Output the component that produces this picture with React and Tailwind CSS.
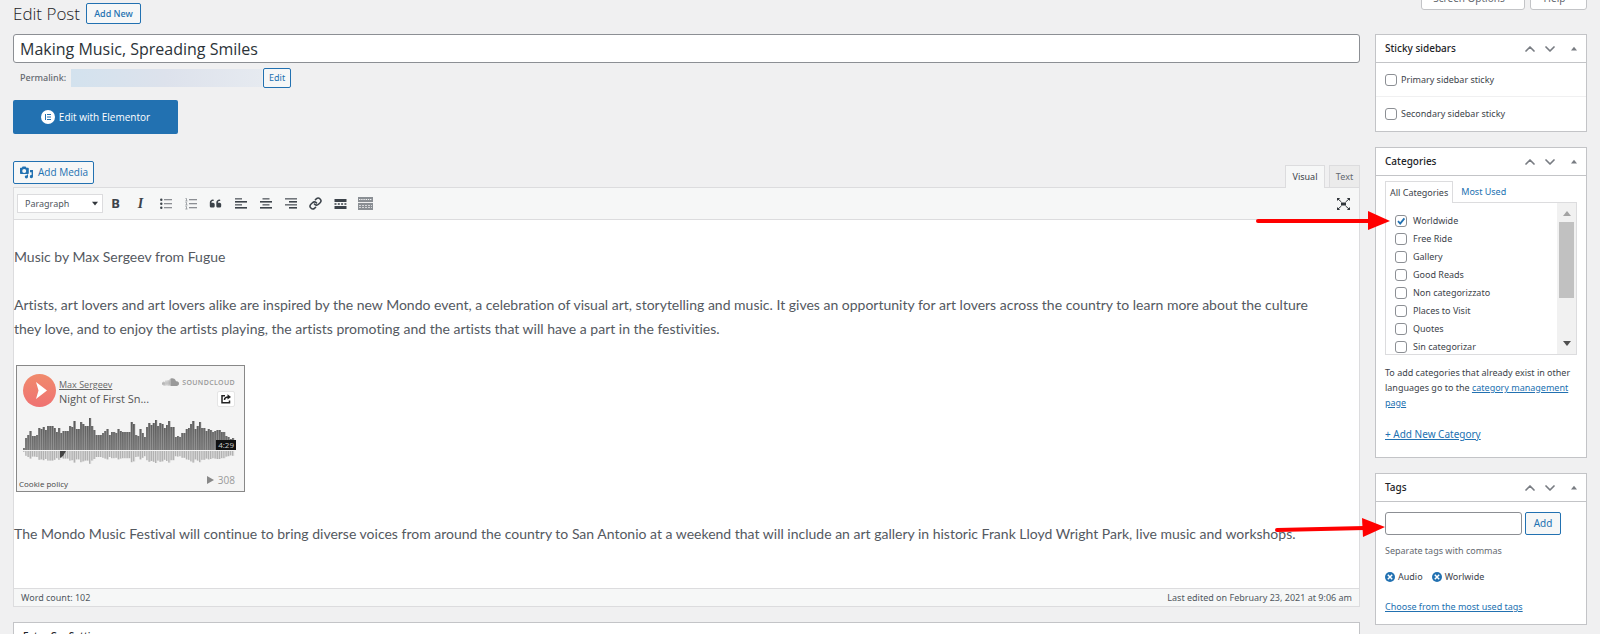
import { useState } from 'react';
import { ChevronDown, ChevronUp, Link } from 'lucide-react';
import { FaQuoteLeft, FaSoundcloud } from 'react-icons/fa6';

const CATEGORIES = ['Worldwide', 'Free Ride', 'Gallery', 'Good Reads', 'Non categorizzato', 'Places to Visit', 'Quotes', 'Sin categorizar'];

const PEAKS = [
  2, 12, 15, 19, 14, 14, 15, 22, 21, 23, 20, 24, 24, 24, 22, 18, 22, 17, 19, 19, 19, 24, 23, 29, 21, 21, 28, 26, 24, 24, 32, 24,
  20, 15, 15, 15, 17, 19, 21, 15, 18, 18, 17, 21, 19, 18, 18, 18, 18, 28, 26, 15, 14, 21, 17, 13, 23, 27, 25, 27, 30, 24, 27, 26,
  22, 25, 29, 23, 23, 13, 14, 13, 17, 17, 21, 22, 26, 29, 21, 24, 28, 22, 22, 19, 21, 20, 18, 19, 20, 20, 18, 18, 14, 13, 11, 12,
];

const outlineBtn = 'rounded-[2px] border border-[#2271b1] bg-[#f6f7f7] text-[#2271b1] cursor-pointer';
const link = 'text-[#2271b1] underline';

function Lines({ widths, align }) {
  return (
    <svg width="12" height="11" viewBox="0 0 12 11" aria-hidden="true">
      {widths.map((w, i) => (
        <rect key={i} x={align === 'right' ? 12 - w : align === 'center' ? (12 - w) / 2 : 0} y={i * 3} width={w} height="1.6"
          fill={i % 2 ? '#3c434a' : '#72777c'} />
      ))}
    </svg>
  );
}

function ListIcon({ ordered }) {
  return (
    <svg width="12" height="12" viewBox="0 0 12 12" aria-hidden="true">
      {[1, 5, 9].map((y) => (
        <g key={y}>
          {ordered
            ? <path d={`M0.5 ${y - 0.5}h1v2.4M0.3 ${y + 2}h2.2`} stroke="#8c8f94" strokeWidth="0.8" fill="none" />
            : <circle cx="1.3" cy={y + 0.7} r="1.2" fill="#3c434a" />}
          <rect x="4" y={y} width="8" height="1.3" fill="#8c8f94" />
        </g>
      ))}
    </svg>
  );
}

function MoreIcon() {
  return (
    <svg width="13" height="12" viewBox="0 0 13 12" fill="#3c434a" aria-hidden="true">
      <path d="M0.5 1h12v3h-12zM0.5 8h12v3h-12zM0.5 5.3h2v1.4h-2zM3.8 5.3h2v1.4h-2zM7.1 5.3h2v1.4h-2zM10.4 5.3h2v1.4h-2z" />
    </svg>
  );
}

function KitchenSinkIcon() {
  return (
    <svg width="15" height="13" viewBox="0 0 15 13" aria-hidden="true">
      <rect width="15" height="13" fill="#8a8f94" />
      <path d="M1 2.5h13" stroke="#f0f0f1" strokeWidth="1" strokeDasharray="1.4 0.8" />
      <path d="M0 5.5h15" stroke="#f0f0f1" strokeWidth="1" />
      <path d="M1 8.5h13M1 10.5h13" stroke="#d5d6d9" strokeWidth="1" strokeDasharray="2 1" />
    </svg>
  );
}

function FullscreenIcon() {
  return (
    <svg width="13" height="12" viewBox="0 0 13 12" fill="#32373c" aria-hidden="true">
      <path d="M0 0h3.2L0 3zM13 0H9.8L13 3zM0 12h3.2L0 9zM13 12H9.8L13 9z" />
      <path d="M1 1l3.4 3M12 1L8.6 4M1 11l3.4-3M12 11L8.6 8" stroke="#32373c" strokeWidth="1" />
      <rect x="4" y="4.5" width="5" height="3" />
    </svg>
  );
}

function MediaIcon() {
  return (
    <svg width="14" height="13" viewBox="0 0 14 13" fill="#2271b1" aria-hidden="true">
      <path fillRule="evenodd" d="M0.6 1.8h1.2L2.6 0.6h3l0.8 1.2H8c0.5 0 0.8 0.3 0.8 0.8v4.6c0 0.5-0.3 0.8-0.8 0.8H0.8C0.3 8 0 7.7 0 7.2V2.6c0-0.5 0.2-0.8 0.6-0.8zM4.2 2.9a2 2 0 1 0 0 4 2 2 0 0 0 0-4z" />
      <path d="M10 4h3v6.6a1.6 1.6 0 1 1-1.4-1.6V6.2H10z" />
      <circle cx="6.4" cy="10.8" r="1.6" />
      <path d="M7 8.4h1v2.4H7z" />
    </svg>
  );
}

function ElementorIcon() {
  return (
    <svg width="14" height="14" viewBox="0 0 14 14" aria-hidden="true">
      <circle cx="7" cy="7" r="7" fill="#fff" />
      <path d="M4 4h1v6h-1zM6 4h4v1h-4zM6 6.5h4v1h-4zM6 9h4v1h-4z" fill="#2271b1" />
    </svg>
  );
}

function Caret({ down, className }) {
  return (
    <svg width="8" height="5" viewBox="0 0 8 5" className={className} aria-hidden="true">
      <path d={down ? 'M0 0h8L4 5z' : 'M0 5h8L4 0z'} fill="currentColor" />
    </svg>
  );
}

function Checkbox({ label, defaultChecked, className }) {
  const [checked, setChecked] = useState(!!defaultChecked);
  return (
    <label className={`flex items-center ${className}`}>
      <span className="relative flex">
        <input type="checkbox" checked={checked} onChange={(e) => setChecked(e.target.checked)}
          className="appearance-none size-3 rounded-[3px] border border-[#8c8f94] bg-white" />
        {checked && (
          <svg viewBox="0 0 12 12" className="absolute inset-0 size-3 pointer-events-none" aria-hidden="true">
            <path d="M3 6.2l2.2 2.4L9.4 3.4" fill="none" stroke="#2271b1" strokeWidth="1.8" />
          </svg>
        )}
      </span>
      {label}
    </label>
  );
}

function Panel({ title, children }) {
  return (
    <section className="border border-[#c3c4c7] bg-white">
      <div className="flex items-center h-7 pl-[9px] pr-[2px] border-b border-[#c3c4c7]">
        <h2 className="flex-1 text-[10px] font-medium text-[#1d2327]">{title}</h2>
        <div className="flex items-center text-[#787c82]">
          <button aria-label={`Move ${title} up`} className="w-5 flex justify-center"><ChevronUp size={16} strokeWidth={2.6} /></button>
          <button aria-label={`Move ${title} down`} className="w-5 flex justify-center"><ChevronDown size={16} strokeWidth={2.6} /></button>
          <button aria-label={`Toggle ${title}`} className="w-5 ml-1 flex justify-center"><Caret className="w-[6px]" /></button>
        </div>
      </div>
      {children}
    </section>
  );
}

function Waveform() {
  return (
    <svg viewBox="0 0 213 48" className="w-full h-12" aria-hidden="true">
      <defs>
        <linearGradient id="wave" x1="0" y1="0" x2="0" y2="33" gradientUnits="userSpaceOnUse">
          <stop offset="0" stopColor="#555" />
          <stop offset="1" stopColor="#777" />
        </linearGradient>
      </defs>
      {PEAKS.map((h, i) => (
        <g key={i}>
          <rect x={i * 2.2} y={33 - h} width="2.2" height={h} fill="#8c8c8c" />
          <rect x={i * 2.2} y={33 - h} width="1.5" height={h} fill="url(#wave)" />
          <rect x={i * 2.2} y="34" width="1.5" height={h * 0.4} fill="#b2b2b2" />
          <rect x={i * 2.2 + 1.5} y="34" width="0.7" height={h * 0.4} fill="#d4d4d4" />
        </g>
      ))}
      <path d="M37 34h6l-3 5-3 2z" fill="#444" />
    </svg>
  );
}

function Player() {
  return (
    <div className="w-[229px] ml-[2px] border border-[#888] bg-[#f4f4f4] font-['Open_Sans',sans-serif]">
      <div className="flex pl-[6px] pr-[9px] pt-2">
        <button aria-label="Play" className="size-[33px] rounded-full bg-linear-to-b from-[#f08a6c] to-[#ef7272]">
          <svg viewBox="0 0 33 33" aria-hidden="true"><path d="M13 8l11 8.5-11 8.5 2.5-8.5z" fill="#fff" /></svg>
        </button>
        <div className="flex-1 ml-[3px] pt-1">
          <a href="#artist" className="block w-fit text-[9px] leading-[13px] text-[#666] underline">Max Sergeev</a>
          <p className="text-[11px] leading-[16px] text-[#555] whitespace-nowrap">Night of First Sn...</p>
        </div>
        <div className="flex flex-col items-end">
          <span className="flex items-center gap-[3px] text-[#999]">
            <FaSoundcloud size={17} />
            <span className="text-[7px] leading-3 font-semibold tracking-wider">SOUNDCLOUD</span>
          </span>
          <button aria-label="Share" className="w-[18px] h-4 rounded-[2px] border border-[#e5e5e5] bg-white flex items-center justify-center">
            <svg width="10" height="10" viewBox="0 0 10 10" fill="none" stroke="#222" strokeWidth="1.5" aria-hidden="true">
              <path d="M4 1.8H1v7h7.5V6.5M3.5 6c0-2 1.5-3 4-3" />
              <path d="M6.5 0.3L10 3 6.5 5.5z" fill="#222" stroke="none" />
            </svg>
          </button>
        </div>
      </div>
      <div className="relative ml-1 mr-[6px] mt-[10px]">
        <Waveform />
        <span className="absolute right-[2px] top-[23px] px-[2px] bg-[#111] text-[8px] leading-[10px] text-[#ccc]">4:29</span>
      </div>
      <div className="flex items-end justify-between pl-[2px] pr-[9px] h-[26px]">
        <a href="#cookies" className="text-[8px] leading-[14px] text-[#444]">Cookie policy</a>
        <span className="flex items-center gap-1 pb-1 text-[10px] leading-[14px] text-[#999]">
          <svg width="7" height="8" viewBox="0 0 7 8" aria-hidden="true"><path d="M0 0l7 4-7 4z" fill="#888" /></svg>
          308
        </span>
      </div>
    </div>
  );
}

function Toolbar() {
  const tool = 'w-[25px] h-6 flex items-center justify-center text-[#3c434a]';
  return (
    <div className="flex items-center h-8 pl-[3px] pr-[9px] border-b border-[#dcdcde] bg-[#f6f7f7]">
      <div className="relative">
        <select aria-label="Format" className="block appearance-none w-[86px] h-[19px] pl-[7px] border border-[#dcdcde] bg-white text-[9px] text-[#50575e]">
          <option>Paragraph</option>
        </select>
        <Caret down className="absolute right-[5px] top-[7px] w-[6px] text-[#32373c] pointer-events-none" />
      </div>
      <button aria-label="Bold" className={`${tool} font-bold text-[13px]`}>B</button>
      <button aria-label="Italic" className={`${tool} font-bold italic text-[14px] font-['Liberation_Serif',serif]`}>I</button>
      <button aria-label="Bulleted list" className={tool}><ListIcon /></button>
      <button aria-label="Numbered list" className={tool}><ListIcon ordered /></button>
      <button aria-label="Blockquote" className={tool}><FaQuoteLeft size={13} /></button>
      <button aria-label="Align left" className={tool}><Lines widths={[7, 12, 7, 12]} /></button>
      <button aria-label="Align center" className={tool}><Lines widths={[7, 12, 7, 12]} align="center" /></button>
      <button aria-label="Align right" className={tool}><Lines widths={[12, 8, 12, 8]} align="right" /></button>
      <button aria-label="Insert link" className={tool}><Link size={13} strokeWidth={2.8} /></button>
      <button aria-label="Read more" className={tool}><MoreIcon /></button>
      <button aria-label="Toolbar toggle" className={tool}><KitchenSinkIcon /></button>
      <button aria-label="Fullscreen" className="ml-auto"><FullscreenIcon /></button>
    </div>
  );
}

function Editor() {
  return (
    <div className="border border-[#dcdcde] bg-white">
      <Toolbar />
      <div className="pt-[25px] pb-[42px] font-['Lato',sans-serif] text-[14px] leading-6 text-[#54595f] [font-variant-ligatures:none]">
        <p>Music by Max Sergeev from Fugue</p>
        <p className="mt-6 pr-7">
          Artists, art lovers and art lovers alike are inspired by the new Mondo event, a celebration of visual art, storytelling and
          music. It gives an opportunity for art lovers across the country to learn more about the culture they love, and to enjoy the
          artists playing, the artists promoting and the artists that will have a part in the festivities.
        </p>
        <div className="mt-6"><Player /></div>
        <p className="mt-[30px]">
          The Mondo Music Festival will continue to bring diverse voices from around the country to San Antonio at a weekend that will
          include an art gallery in historic Frank Lloyd Wright Park, live music and workshops.
        </p>
      </div>
      <div className="flex items-center justify-between h-[18px] px-[7px] border-t border-[#dcdcde] bg-[#f6f7f7] text-[9px] text-[#50575e]">
        <span>Word count: 102</span>
        <span>Last edited on February 23, 2021 at 9:06 am</span>
      </div>
    </div>
  );
}

function CategoriesPanel() {
  return (
    <Panel title="Categories">
      <div className="px-[9px] pt-[5px] pb-[15px]">
        <div className="flex items-end">
          <button className="relative -mb-px h-[22px] px-1 border border-b-0 border-[#dcdcde] bg-white text-[9px] text-[#3c434a]">All Categories</button>
          <button className="h-[21px] px-2 text-[9px] text-[#2271b1]">Most Used</button>
        </div>
        <div className="flex h-[153px] border border-[#dcdcde] text-[9px]">
          <div className="flex-1 pl-[9px] pt-[9px]">
            {CATEGORIES.map((name, i) => (
              <Checkbox key={name} label={name} defaultChecked={i === 0} className="h-[18px] gap-[6px]" />
            ))}
          </div>
          <div className="w-[19px] px-[2px] py-2 flex flex-col items-center bg-[#f1f1f1]">
            <Caret className="text-[#a3a3a3]" />
            <div className="mt-[6px] w-full h-[76px] bg-[#c1c1c1]" />
            <Caret down className="mt-auto text-[#505050]" />
          </div>
        </div>
        <p className="mt-[10px] text-[9px] leading-[15px]">
          To add categories that already exist in other languages go to the <a href="#manage" className={link}>category management page</a>
        </p>
        <a href="#new" className={`mt-4 block w-fit text-[10px] leading-4 ${link}`}>+ Add New Category</a>
      </div>
    </Panel>
  );
}

function Tag({ name }) {
  return (
    <span className="flex items-center gap-[3px]">
      <button aria-label={`Remove ${name}`}>
        <svg width="10" height="10" viewBox="0 0 10 10" className="block" aria-hidden="true">
          <circle cx="5" cy="5" r="5" fill="#2271b1" />
          <path d="M2.8 2.8l4.4 4.4M7.2 2.8L2.8 7.2" stroke="#fff" strokeWidth="1.5" />
        </svg>
      </button>
      {name}
    </span>
  );
}

function TagsPanel() {
  return (
    <Panel title="Tags">
      <div className="px-[9px] pt-[10px] pb-[9px] text-[9px]">
        <div className="flex gap-[3px]">
          <input aria-label="Add new tag" className="w-[137px] h-[23px] px-2 rounded-[3px] border border-[#8c8f94] bg-white" />
          <button className={`w-9 h-[23px] text-[10px] ${outlineBtn}`}>Add</button>
        </div>
        <p className="mt-2 leading-4 text-[#646970]">Separate tags with commas</p>
        <div className="mt-[10px] flex gap-[9px] leading-4"><Tag name="Audio" /><Tag name="Worlwide" /></div>
        <a href="#tags" className={`mt-[14px] block w-fit leading-4 ${link}`}>Choose from the most used tags</a>
      </div>
    </Panel>
  );
}

export default function App() {
  return (
    <div className="relative h-screen overflow-hidden bg-[#f0f0f1] px-[13px] font-['Noto_Sans',sans-serif] text-[#3c434a]">
      <header className="flex items-start h-[34px]">
        <h1 className="text-[17px] leading-[27px] font-light text-[#1d2327] font-['Open_Sans',sans-serif]">Edit Post</h1>
        <button className={`mt-[3px] ml-[6px] h-[21px] w-[55px] text-[9px] font-medium ${outlineBtn}`}>Add New</button>
        <div className="ml-auto -mt-[14px] flex gap-[5px] text-[10px] text-[#646970]">
          <button className="h-6 w-[104px] pr-2 rounded-b-[3px] border border-[#c3c4c7] bg-white">Screen Options</button>
          <button className="h-6 w-[57px] pr-2 rounded-b-[3px] border border-[#c3c4c7] bg-white">Help</button>
        </div>
      </header>

      <div className="flex items-start gap-[15px]">
        <main className="flex-1 min-w-0">
          <input aria-label="Post title" defaultValue="Making Music, Spreading Smiles"
            className="block w-full h-[29px] px-[6px] rounded-[3px] border border-[#8c8f94] bg-white text-[16px] text-[#2c3338] font-['Open_Sans',sans-serif]" />
          <div className="mt-[5px] pl-[7px] flex items-center text-[9px]">
            <span className="font-medium text-[#646970]">Permalink:</span>
            <span className="ml-[5px] w-[191px] h-[18px] bg-[#dbe2ea] bg-linear-to-r from-[#d3e2ee] via-[#dde2ec] to-[#e6eaf0]" />
            <button className={`ml-px w-7 h-5 text-[9px] ${outlineBtn}`}>Edit</button>
          </div>
          <button className="mt-3 flex items-center justify-center gap-1 w-[165px] h-[34px] rounded-[2px] bg-[#2271b1] text-white text-[10px] font-medium font-['Open_Sans',sans-serif]">
            <ElementorIcon />
            Edit with Elementor
          </button>
          <div className="mt-[27px] flex items-start justify-between">
            <button className={`flex items-center gap-1 h-[23px] pl-[6px] pr-[5px] text-[10px] font-['Open_Sans',sans-serif] ${outlineBtn}`}>
              <MediaIcon />
              Add Media
            </button>
            <div className="relative mt-1 -mb-px flex gap-1 text-[9px]">
              <button className="h-[23px] w-10 border border-b-0 border-[#dcdcde] bg-[#f6f7f7]">Visual</button>
              <button className="h-[22px] w-[31px] border border-b-0 border-[#dcdcde] bg-[#ebebeb] text-[#646970]">Text</button>
            </div>
          </div>
          <Editor />
          <div className="mt-[15px]">
            <Panel title="Extra Css Settings" />
          </div>
        </main>

        <aside className="w-[212px] shrink-0 flex flex-col gap-[15px]">
          <Panel title="Sticky sidebars">
            <Checkbox label="Primary sidebar sticky" className="h-[34px] px-[9px] gap-1 text-[9px] border-b border-[#f0f0f1]" />
            <Checkbox label="Secondary sidebar sticky" className="h-[34px] px-[9px] gap-1 text-[9px]" />
          </Panel>
          <CategoriesPanel />
          <TagsPanel />
        </aside>
      </div>

      <svg width="134" height="20" viewBox="0 0 134 20" className="absolute right-[210px] top-[211px] pointer-events-none" aria-hidden="true">
        <path d="M2 10h112" stroke="#f00" strokeWidth="4" strokeLinecap="round" />
        <path d="M112 0l22 10-22 9z" fill="#f00" />
      </svg>
      <svg width="110" height="20" viewBox="0 0 110 20" className="absolute right-[215px] top-[518px] pointer-events-none" aria-hidden="true">
        <path d="M2 12l88-2" stroke="#f00" strokeWidth="4" strokeLinecap="round" />
        <path d="M87 0l23 9-22 10z" fill="#f00" />
      </svg>
    </div>
  );
}
